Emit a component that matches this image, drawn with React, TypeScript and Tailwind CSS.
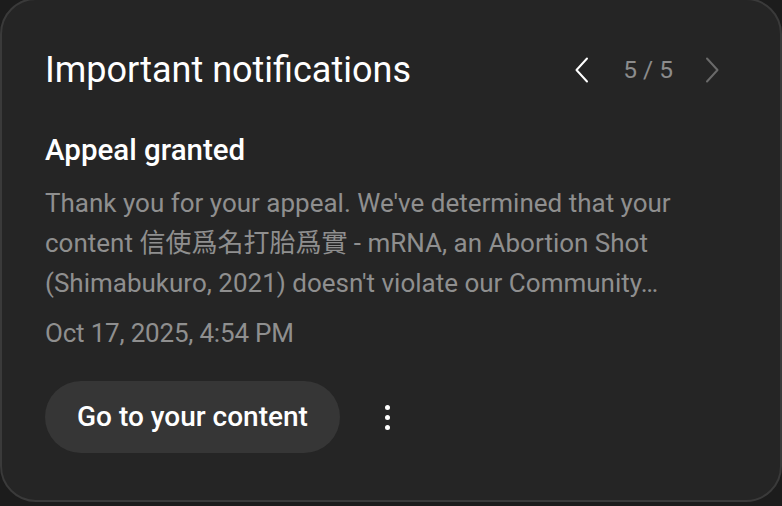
import React from "react";

const Chevron = ({ dir, color }: { dir: "left" | "right"; color: string }) => (
  <svg width="16" height="26" viewBox="0 0 16 26" fill="none">
    <path
      d={dir === "left" ? "M13 1.5 L2.5 13 L13 24.5" : "M3 1.5 L13.5 13 L3 24.5"}
      stroke={color}
      strokeWidth="2"
      strokeLinecap="round"
      strokeLinejoin="round"
    />
  </svg>
);

const App = () => {
  return (
    <div
      className="h-[506px] w-[782px] overflow-hidden bg-[#1c1c1c]"
      style={{ fontFamily: "Roboto, 'Noto Sans CJK TC', sans-serif" }}
    >
      {/* card */}
      <div className="-mt-[2px] flex h-[504px] w-[782px] flex-col rounded-[36px] border-2 border-[#3a3a3a] bg-[#252525] pl-[43px] pr-[60px]">
        {/* header */}
        <div className="mt-[50px] flex h-[40px] items-center justify-between">
          <h1 className="text-[36px] leading-none text-white">
            Important notifications
          </h1>
          <div className="flex items-center">
            <Chevron dir="left" color="#ffffff" />
            <span className="ml-[33px] mr-[31px] text-[24.5px] text-[#8c8c8c]">5 / 5</span>
            <Chevron dir="right" color="#6a6a6a" />
          </div>
        </div>

        {/* body */}
        <div className="mt-[42px] text-[29.5px] font-medium leading-[36px] text-white">
          Appeal granted
        </div>
        <p className="mt-[15px] text-[26px] leading-[40px] text-[#8f8f8f]">
          Thank you for your appeal. We've determined that your
          <br />
          content 信使爲名打胎爲實 - mRNA, an Abortion Shot
          <br />
          (Shimabukuro, 2021) doesn't violate our Community…
        </p>
        <div className="mt-[15px] text-[26px] leading-[30px] tracking-[-0.2px] text-[#8f8f8f]">
          Oct 17, 2025, 4:54 PM
        </div>

        {/* actions */}
        <div className="mt-[33px] flex items-center">
          <button className="flex h-[72px] items-center rounded-full bg-[#363636] px-[32px] text-[28px] font-medium text-white">
            Go to your content
          </button>
          <div className="ml-[45px] flex flex-col items-center gap-[5px]">
            <span className="h-[5px] w-[5px] rounded-full bg-white" />
            <span className="h-[5px] w-[5px] rounded-full bg-white" />
            <span className="h-[5px] w-[5px] rounded-full bg-white" />
          </div>
        </div>
      </div>
    </div>
  );
};

export default App;
